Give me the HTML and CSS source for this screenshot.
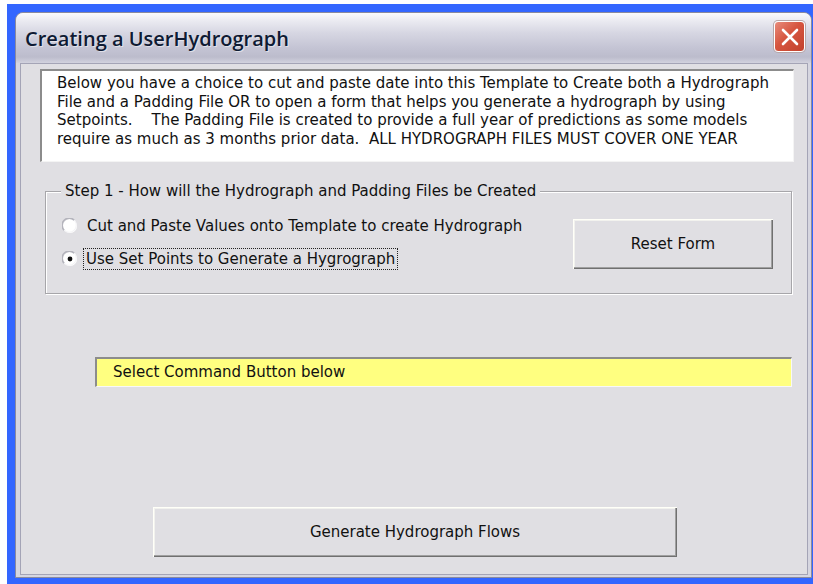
FILE: index.html
```html
<!DOCTYPE html>
<html>
<head>
<meta charset="utf-8">
<title>Creating a UserHydrograph</title>
<link rel="stylesheet" href="styles.css">
</head>
<body>
<div class="desk">
  <div class="window">
    <div class="titlebar">
      <span class="title">Creating a UserHydrograph</span>
      <button class="close" aria-label="Close">
        <svg width="20" height="20" viewBox="0 0 20 20"><path d="M3 3 L17 17 M17 3 L3 17" stroke="#fff" stroke-width="2.6" stroke-linecap="round"/></svg>
      </button>
    </div>
    <div class="client">
      <div class="intro">Below you have a choice to cut and paste date into this Template to Create both a Hydrograph File and a Padding File OR to open a form that helps you generate a hydrograph by using Setpoints.&nbsp;&nbsp;&nbsp; The Padding File is created to provide a full year of predictions as some models require as much as 3 months prior data.&nbsp; ALL HYDROGRAPH FILES MUST COVER ONE YEAR</div>

      <fieldset class="group">
        <legend>Step 1 - How will the Hydrograph and Padding Files be Created</legend>
        <div class="group-body">
          <div class="options">
            <label class="option">
              <svg class="radio" width="16" height="16" viewBox="0 0 16 16">
                <circle cx="8" cy="8" r="7" fill="#fff"/>
                <path d="M2.2 12.2 A7 7 0 0 1 12.2 2.2" fill="none" stroke="#b4b4bc" stroke-width="1.6"/>
                <path d="M12.2 2.2 A7 7 0 0 1 2.2 12.2" fill="none" stroke="#f4f4f6" stroke-width="1.2"/>
              </svg>
              <span>Cut and Paste Values onto Template to create Hydrograph</span>
            </label>
            <label class="option">
              <svg class="radio" width="16" height="16" viewBox="0 0 16 16">
                <circle cx="8" cy="8" r="7" fill="#fff"/>
                <path d="M2.2 12.2 A7 7 0 0 1 12.2 2.2" fill="none" stroke="#b4b4bc" stroke-width="1.6"/>
                <path d="M12.2 2.2 A7 7 0 0 1 2.2 12.2" fill="none" stroke="#f4f4f6" stroke-width="1.2"/>
                <circle cx="8" cy="8" r="2.4" fill="#111"/>
              </svg>
              <span class="focused">Use Set Points to Generate a Hygrograph</span>
            </label>
          </div>
          <button class="btn reset">Reset Form</button>
        </div>
      </fieldset>

      <div class="status">Select Command Button below</div>

      <button class="btn generate">Generate Hydrograph Flows</button>
    </div>
  </div>
</div>
</body>
</html>
```
FILE: styles.css
```css
html, body {
  margin: 0;
  padding: 0;
  background: #ffffff;
}

body {
  font-family: "DejaVu Sans", sans-serif;
  font-size: 15px;
  color: #111;
}

.desk {
  margin: 4px 0 0 7px;
  height: 580px;
  box-sizing: border-box;
  padding: 8px 1px 6px 8px;
  background: #3366ff;
}

.window {
  height: 566px;
  box-sizing: border-box;
  border: 1px solid #8a8a9e;
  border-radius: 8px 8px 0 0;
  background: #d6d6e0;
  display: flex;
  flex-direction: column;
  overflow: hidden;
}

.titlebar {
  height: 50px;
  flex: none;
  display: flex;
  align-items: center;
  justify-content: space-between;
  padding: 0 6px 0 9px;
  background: linear-gradient(#fbfbfd 0%, #ececf2 14%, #d6d6e2 40%, #c4c4d4 70%, #bcbccc 88%, #d2d2de 100%);
}

.title {
  font-family: "Open Sans", "DejaVu Sans", sans-serif;
  font-weight: 600;
  font-size: 20px;
  color: #0e1a33;
  text-shadow: 1px 1px 0 rgba(255, 255, 255, 0.5);
}

.close {
  align-self: flex-start;
  margin-top: 8px;
  width: 31px;
  height: 31px;
  padding: 0;
  border: 1px solid #ffffff;
  border-radius: 4px;
  background: linear-gradient(135deg, #e88c7c 0%, #d6553f 45%, #c2422e 100%);
  box-shadow: 0 0 0 1px #b7a6a8;
  display: flex;
  align-items: center;
  justify-content: center;
}

.client {
  flex: 1;
  margin: 0 3px 2px 4px;
  border: 1px solid #a4a4b6;
  background: #e0dfe3;
  display: flex;
  flex-direction: column;
  align-items: flex-start;
  padding: 5px 0 0 19px;
}

.intro {
  width: 754px;
  height: 93px;
  box-sizing: border-box;
  background: #ffffff;
  border-top: 2px solid #8c8c8c;
  border-left: 2px solid #8c8c8c;
  border-right: 1px solid #f4f4f4;
  border-bottom: 1px solid #f4f4f4;
  padding: 3px 8px 0 15px;
  line-height: 18.5px;
  white-space: normal;
}

.group {
  margin: 20px 0 0 5px;
  width: 747px;
  height: 112px;
  box-sizing: border-box;
  padding: 0;
  border: 1px solid #a7a6aa;
  box-shadow: inset 1px 1px 0 #fff, 1px 1px 0 #fff;
}

.group legend {
  margin-left: 15px;
  padding: 0 4px;
  background: #e0dfe3;
  line-height: 18px;
}

.group-body {
  display: flex;
  justify-content: space-between;
  align-items: flex-start;
  padding: 15px 18px 0 16px;
}

.options {
  display: flex;
  flex-direction: column;
  gap: 11px;
}

.option {
  display: flex;
  align-items: center;
  gap: 9px;
  height: 22px;
}

.radio {
  flex: none;
}

.focused {
  outline: 1px dotted #222;
  outline-offset: 0;
  padding: 1px 2px;
  margin-left: -3px;
}

.btn {
  font: inherit;
  color: #111;
  background: #e0dfe3;
  border: none;
  padding: 0;
  box-shadow: inset 1px 1px 0 #fffff8, inset -1px -1px 0 #707070, inset -2px -2px 0 #a0a0a0, inset 2px 2px 0 #f2f2ee;
}

.reset {
  width: 200px;
  height: 50px;
  margin-top: 4px;
}

.status {
  margin: 63px 0 0 55px;
  width: 697px;
  height: 30px;
  box-sizing: border-box;
  background: #ffff80;
  border-top: 2px solid #8c8c8c;
  border-left: 2px solid #8c8c8c;
  border-right: 1px solid #f8f8f8;
  border-bottom: 1px solid #f8f8f8;
  padding: 0 0 0 16px;
  line-height: 27px;
}

.generate {
  margin: 120px 0 0 113px;
  width: 524px;
  height: 50px;
}
```
